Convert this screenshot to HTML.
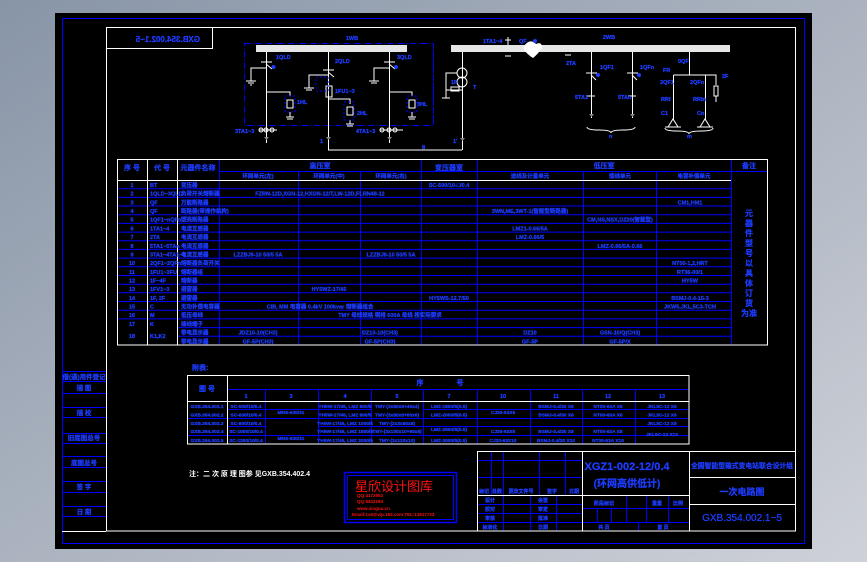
<!DOCTYPE html>
<html><head><meta charset="utf-8"><style>
html,body{margin:0;padding:0;width:867px;height:562px;overflow:hidden}
svg{display:block}
.t{fill:#1d3cff;stroke:#1d3cff;stroke-width:0.25px;font-family:"Liberation Sans","Noto Sans CJK SC",sans-serif;font-weight:bold;font-size:5.5px}
.m{text-anchor:middle}
.w{fill:#fff}
</style></head><body>
<svg width="867" height="562" viewBox="0 0 867 562" xmlns="http://www.w3.org/2000/svg">
<defs><linearGradient id="g" x1="0" y1="0" x2="1" y2="1"><stop offset="0" stop-color="#8895a7"/><stop offset="1" stop-color="#ced1d8"/></linearGradient></defs>
<rect width="867" height="562" fill="url(#g)"/>
<rect x="55" y="13" width="757" height="536" fill="#000"/>
<rect x="62.5" y="18.5" width="742" height="525" fill="none" stroke="#0000ff"/>
<rect x="106.5" y="27.5" width="689" height="503.5" fill="none" stroke="#fff"/>
<rect x="106.5" y="27.5" width="106" height="21" fill="none" stroke="#fff"/>
<text class="t" x="-200" y="42" transform="scale(-1,1)" style="font-size:8px">GXB.354.002.1~5</text>

<g fill="none" stroke="#0000ff" stroke-dasharray="6,2,1,2">
<rect x="244.5" y="43.5" width="189" height="82"/>
</g>
<rect x="256" y="45" width="151" height="7" fill="#e6e6e6"/>
<text class="t m" x="352" y="40">1WB</text>
<g stroke="#fff" fill="none" stroke-width="1">
<path d="M266.5 52V143M328.5 52V150H462M389.5 52V143"/>
<path d="M261 62h11M266 64l6 5M266.5 68H251V81M246 81h10M248 83h6M250 85h2"/>
<path d="M266.5 92H290V96M290 112v5M286 117h8M287 119h6"/>
<rect x="287" y="100" width="6" height="8"/>
<path d="M323 70h11M328 72l6 5M328.5 75H309V88M304 88h10M306 90h6"/>
<rect x="326" y="86" width="6" height="11"/>
<path d="M328.5 99H350V104M350 120v4M346 124h8M347 126h6"/>
<rect x="347" y="107" width="6" height="8"/>
<path d="M384 62h11M389 64l6 5M389.5 68H374V81M369 81h10M371 83h6"/>
<path d="M389.5 92H412V96M412 112v5M408 117h8M409 119h6"/>
<rect x="409" y="100" width="6" height="8"/>
<path d="M259 130h18M385 130h18M380 130h5"/>
<circle cx="261" cy="130" r="2"/><circle cx="266" cy="130" r="2"/><circle cx="272" cy="130" r="2"/>
<circle cx="382" cy="130" r="2"/><circle cx="389" cy="130" r="2"/><circle cx="395" cy="130" r="2"/>
</g>
<g fill="#1d3cff"><circle cx="273.5" cy="67" r="2"/><circle cx="396" cy="67" r="2"/></g>
<g fill="none" stroke="#0000ff" stroke-dasharray="2,2">
<rect x="285" y="96" width="10" height="16"/><rect x="344" y="102" width="10" height="18"/><rect x="407" y="96" width="10" height="16"/><rect x="316" y="77" width="12" height="14"/>
</g>
<g fill="#888"><path d="M264 137h5l-2.5 3zM326 137h5l-2.5 3zM387 137h5l-2.5 3z"/></g>
<g class="t">
<text x="276" y="59">1QLD</text><text x="335" y="63">2QLD</text><text x="397" y="59">3QLD</text>
<text x="297" y="104">1HL</text><text x="357" y="115">2HL</text><text x="417" y="106">3HL</text>
<text x="335" y="93">1FU1~3</text>
<text x="235" y="133">3TA1~3</text><text x="356" y="133">4TA1~3</text>
<text x="320" y="143">1</text><text x="422" y="149">II</text>
</g>

<rect x="451" y="45" width="279" height="7" fill="#e6e6e6"/>
<text class="t m" x="609" y="39">2WB</text>
<g stroke="#fff" fill="none">
<path d="M462.5 52V150M591.5 52V118M632.5 52V118M689.5 52V75H716V85M716 96v6M673.5 75H705.5M673.5 75V120M705.5 75V120"/>
<circle cx="462" cy="73" r="5"/><circle cx="462" cy="82" r="5"/>
<path d="M457 73h-11v17h16M446 90v8M442 98h8M451 87h8v4h-8z"/>
<path d="M586 73h11M591 75l5 5M627 73h11M632 75l5 5"/>
<path d="M587 96h8M628 96h8"/>
<rect x="714" y="86" width="4" height="10"/>
<path d="M668 127l5-8 5 8zM700 127l5-8 5 8zM665 127h16M697 127h16"/>
<path d="M587 127q0 3 12 3t12 3q0-3 12-3t12-3M665 128q0 3 12 3t12 3q0-3 12-3t12-3"/>
<path d="M505 40h6M508 37v8M505 56h6M565 55h6"/>
</g>
<path d="M524 46q6-8 12-2q6-3 6 4q-4 6-9 10q-5-3-9-8z" fill="#fff"/>
<g fill="#1d3cff"><circle cx="535" cy="41" r="2"/><circle cx="598" cy="75" r="2"/><circle cx="639" cy="75" r="2"/></g>
<g fill="#888"><path d="M589 114h5l-2.5 3zM630 114h5l-2.5 3zM460 138h5l-2.5 3z"/></g>
<path d="M433.5 43V125" stroke="#0000ff" stroke-dasharray="6,2"/>
<g class="t">
<text x="483" y="43">1TA1~4</text><text x="519" y="43">QF</text><text x="566" y="65">2TA</text>
<text x="600" y="69">1QF1</text><text x="640" y="69">1QFn</text>
<text x="575" y="99">5TA1</text><text x="618" y="99">5TAn</text>
<text x="678" y="63">0QF</text><text x="722" y="78">2F</text>
<text x="660" y="84">2QF1</text><text x="690" y="84">2QFn</text>
<text x="661" y="101">RRI</text><text x="693" y="101">RRIn</text>
<text x="661" y="115">C1</text><text x="697" y="115">Cn</text>
<text x="663" y="72">FR</text>
<text x="451" y="84">1F</text><text x="473" y="89">T</text><text x="453" y="143">1'</text>
<text x="609" y="138">n</text><text x="687" y="138">m</text>
</g>

<g stroke="#0000ff" fill="none">
<path d="M219 171.5H768"/>
<path d="M117 188.7H731M117 197.4H731M117 206.0H731M117 214.7H731M117 223.4H731M117 232.1H731M117 240.8H731M117 249.4H731M117 258.1H731M117 266.8H731M117 275.5H731M117 284.2H731M117 292.8H731M117 301.5H731M117 310.2H731M117 318.9H731M177 327.6H731M177 336.3H731"/>
<path d="M219.5 159V345M298.5 171V345M360.5 171V345M421.5 159V345M477.5 159V345M583.5 171V345M656.5 171V345M731.5 159V345"/>
</g>
<g stroke="#fff" fill="none">
<rect x="117.5" y="159.5" width="650" height="185.5"/>
<path d="M117 180.5H731M147.5 159V345M177.5 159V345"/>
</g>
<g class="t m" style="font-size:7px">
<text x="132" y="170">序 号</text><text x="162" y="170">代 号</text><text x="198" y="170">元器件名称</text>
<text x="320" y="168">高压室</text><text x="449" y="170">变压器室</text><text x="604" y="168">低压室</text><text x="749" y="168">备注</text>
</g>
<g class="t m">
<text x="258" y="178">环网单元(左)</text><text x="329" y="178">环网单元(中)</text><text x="391" y="178">环网单元(右)</text>
<text x="530" y="178">进线及计量单元</text><text x="620" y="178">馈线单元</text><text x="694" y="178">电容补偿单元</text>
</g>
<g class="t m">
<text x="132" y="187">1</text><text x="132" y="195.7">2</text><text x="132" y="204.4">3</text><text x="132" y="213">4</text><text x="132" y="221.7">5</text><text x="132" y="230.4">6</text><text x="132" y="239.1">7</text><text x="132" y="247.8">8</text><text x="132" y="256.5">9</text><text x="132" y="265.1">10</text><text x="132" y="273.8">11</text><text x="132" y="282.5">12</text><text x="132" y="291.2">13</text><text x="132" y="299.9">14</text><text x="132" y="308.5">15</text><text x="132" y="317.2">16</text><text x="132" y="325.9">17</text><text x="132" y="338">18</text>
</g>
<g class="t">
<text x="150" y="187">BT</text><text x="150" y="195.7">1QLD~3QLD</text><text x="150" y="204.4">QF</text><text x="150" y="213">QF</text><text x="150" y="221.7">1QF1~nQFn</text><text x="150" y="230.4">1TA1~4</text><text x="150" y="239.1">2TA</text><text x="150" y="247.8">5TA1~5TAn</text><text x="150" y="256.5">3TA1~4TA1~3</text><text x="150" y="265.1">2QF1~2QFn</text><text x="150" y="273.8">1FU1~3FU</text><text x="150" y="282.5">1F~4F</text><text x="150" y="291.2">1FV1~3</text><text x="150" y="299.9">1F, 2F</text><text x="150" y="308.5">C</text><text x="150" y="317.2">M</text><text x="150" y="325.9">K</text><text x="150" y="338">K1,K2</text>
<text x="181" y="187">变压器</text><text x="181" y="195.7">负荷开关熔断器</text><text x="181" y="204.4">万能断路器</text><text x="181" y="213">断路器(带操作机构)</text><text x="181" y="221.7">塑壳断路器</text><text x="181" y="230.4">电流互感器</text><text x="181" y="239.1">电流互感器</text><text x="181" y="247.8">电流互感器</text><text x="181" y="256.5">电流互感器</text><text x="181" y="265.1">熔断器负荷开关</text><text x="181" y="273.8">熔断器组</text><text x="181" y="282.5">熔断器</text><text x="181" y="291.2">避雷器</text><text x="181" y="299.9">避雷器</text><text x="181" y="308.5">无功补偿电容器</text><text x="181" y="317.2">低压母线</text><text x="181" y="325.9">接线端子</text><text x="181" y="334.6">带电显示器</text><text x="181" y="343.3">带电显示器</text>
</g>
<g class="t m">
<text x="449" y="187">SC-500/10-□/0.4</text>
<text x="320" y="195.7">FZRN-12D,XGN-12,HXGN-12/T,LW-12D,FLRN48-12</text>
<text x="690" y="204.4">CM1,HM1</text>
<text x="530" y="213">3WN,ME,3WT-1(智能型断路器)</text>
<text x="620" y="221.7">CM,NS,NSX,DZ20(智能型)</text>
<text x="530" y="230.4">LMZ1-0.66/5A</text>
<text x="530" y="239.1">LMZ-0.66/5</text>
<text x="620" y="247.8">LMZ-0.66/5A-0.66</text>
<text x="258" y="256.5">LZZBJ9-10 50/5 5A</text><text x="391" y="256.5">LZZBJ9-10 50/5 5A</text>
<text x="690" y="265.1">NT00-1,2,HRT</text>
<text x="690" y="273.8">RT36-00/1</text>
<text x="690" y="282.5">HY5W</text>
<text x="329" y="291.2">HY5WZ-17/45</text>
<text x="449" y="299.9">HY5WS-12.7/50</text><text x="690" y="299.9">BSMJ-0.4-15-3</text>
<text x="320" y="308.5">CIB, MM 电容器 0.4kV 100kvar 熔断器组合</text><text x="690" y="308.5">JKW5,JKL,5C3-TCH</text>
<text x="390" y="317.2">TMY 母线规格 铜排 600A 母线 按实际要求</text>
<text x="258" y="334.6">JDZ10-10(CH3)</text><text x="380" y="334.6">DZ10-10(CH3)</text><text x="530" y="334.6">DZ10</text><text x="620" y="334.6">GSN-10/Q(CH3)</text>
<text x="258" y="343.3">GF-5P(CH3)</text><text x="380" y="343.3">GF-5P(CH3)</text><text x="530" y="343.3">GF-5P</text><text x="620" y="343.3">GF-5P/X</text>
</g>
<g class="t m" style="font-size:8px">
<text x="749" y="216">元</text><text x="749" y="226">器</text><text x="749" y="236">件</text><text x="749" y="246">型</text><text x="749" y="256">号</text><text x="749" y="266">以</text><text x="749" y="276">具</text><text x="749" y="286">体</text><text x="749" y="296">订</text><text x="749" y="306">货</text><text x="749" y="316">为准</text>
</g>

<g stroke="#0000ff">
<path d="M62 371.5H106M62 381.5H106M62 393.5H106M62 407.5H106M62 417.5H106M62 433.5H106M62 443.5H106M62 456.5H106M62 467.5H106M62 481.5H106M62 492.5H106M62 506.5H106M62 516.5H106"/>
</g>
<path d="M62 531.5H106" stroke="#fff"/>
<g class="t m" style="font-size:6.5px">
<text x="84" y="379">借(通)用件登记</text><text x="84" y="390">描 图</text><text x="84" y="415">描 校</text><text x="84" y="440">旧底图总号</text><text x="84" y="465">底图总号</text><text x="84" y="489">签 字</text><text x="84" y="514">日 期</text>
</g>

<text class="t" x="192" y="370" style="font-size:7px">附表:</text>
<g stroke="#0000ff" fill="none">
<path d="M227 389.5H689M227 409.5H371M423 409.5H689M187 418.5H689M227 426.5H265M318 426.5H689M187 435.5H689"/>
<path d="M265.5 389V444M318.5 389V444M371.5 389V444M423.5 389V444M477.5 389V444M530.5 389V444M582.5 389V444M635.5 389V444"/>
</g>
<g stroke="#fff" fill="none"><rect x="187.5" y="375.5" width="501.5" height="68.5"/><path d="M187 401.5H689M227.5 375V444"/></g>
<g class="t m" style="font-size:7px"><text x="207" y="391">图 号</text><text x="420" y="385">序</text><text x="460" y="385">号</text></g>
<g class="t m"><text x="246" y="398">1</text><text x="291" y="398">3</text><text x="345" y="398">4</text><text x="397" y="398">5</text><text x="449" y="398">7</text><text x="503" y="398">10</text><text x="556" y="398">11</text><text x="608" y="398">12</text><text x="662" y="398">13</text></g>
<g class="t m" style="font-size:4.8px">
<text x="207" y="408">GXB.354.002.1</text><text x="207" y="416.5">GXB.354.002.2</text><text x="207" y="425">GXB.354.002.3</text><text x="207" y="433">GXB.354.002.4</text><text x="207" y="442">GXB.354.002.5</text>
<text x="246" y="408">SC-500/10/0.4</text><text x="246" y="416.5">SC-630/10/0.4</text><text x="246" y="425">SC-800/10/0.4</text><text x="246" y="433">SC-1000/10/0.4</text><text x="246" y="442">SC-1250/10/0.4</text>
<text x="291" y="414">MNS-600/31</text><text x="291" y="440">MNS-630/31</text>
<text x="345" y="408">YH5W-17/45, LMZ 600/5</text><text x="345" y="416.5">YH5W-17/45, LMZ 800/5</text><text x="345" y="425">YH5W-17/45, LMZ 1000/5</text><text x="345" y="433">YH5W-17/45, LMZ 1500/5</text><text x="345" y="442">YH5W-17/45, LMZ 2000/5</text>
<text x="397" y="408">TMY-(3x60x6+40x4)</text><text x="397" y="416.5">TMY-(3x80x8+60x6)</text><text x="397" y="425">TMY-(2x3x80x8)</text><text x="397" y="433">TMY-(3x100x10+80x8)</text><text x="397" y="442">TMY-(3x120x10)</text>
<text x="449" y="408">LMZ-1500/5(0.5)</text><text x="449" y="416.5">LMZ-2000/5(0.5)</text><text x="449" y="431">LMZ-2500/5(0.5)</text><text x="449" y="442">LMZ-3000/5(0.5)</text>
<text x="503" y="414">CJ20-63X6</text><text x="503" y="433">CJ20-63X8</text><text x="503" y="442">CJ20-63X10</text>
<text x="556" y="408">BSMJ-0.4/30 X6</text><text x="556" y="416.5">BSMJ-0.4/30 X6</text><text x="556" y="433">BSMJ-0.4/30 X8</text><text x="556" y="442">BSMJ-0.4/30 X10</text>
<text x="608" y="408">NT00-63A X6</text><text x="608" y="416.5">NT00-63A X6</text><text x="608" y="433">NT00-63A X8</text><text x="608" y="442">NT00-63A X10</text>
<text x="662" y="408">JKL5C-12 X6</text><text x="662" y="416.5">JKL5C-12 X6</text><text x="662" y="425">JKL5C-12 X8</text><text x="662" y="436">JKL5C-12 X10</text>
</g>

<text class="w" x="189" y="476" style="font-family:'Liberation Sans','Noto Sans CJK SC',sans-serif;font-size:7px;font-weight:bold">注：二 次 原 理 图参 见GXB.354.402.4</text>

<rect x="344.5" y="472.5" width="112" height="50" fill="none" stroke="#0000ff" stroke-width="1.5"/>
<rect x="347.5" y="475.5" width="106" height="44" fill="none" stroke="#0000ff"/>
<text x="355" y="491" fill="#ff1010" style="font-family:'Noto Sans CJK SC',sans-serif;font-size:13px">星欣设计图库</text>
<g fill="#ff1010" style="font-family:'Liberation Sans','Noto Sans CJK SC',sans-serif;font-size:4.5px;font-weight:bold">
<text x="357" y="497">QQ:4172553</text><text x="357" y="503">QQ:5432194</text><text x="357" y="510">www.xinguu.cn</text><text x="352" y="516">Email:1x6@vip.163.com TEL:13617723</text>
</g>

<g stroke="#0000ff" fill="none">
<path d="M477 460.5H582M477 477.5H582M582 508.5H689M477 504.5H582M477 513.5H582M477 522.5H582M582 522.5H689"/>
<path d="M491.5 451V495M503.5 451V531M539.5 451V495M565.5 451V495M530.5 495V531M556.5 495V531M626.5 495V522M646.5 495V522M668.5 495V522M597.5 508V522M611.5 508V522M638.5 522V531"/>
</g>
<g stroke="#fff" fill="none">
<rect x="477.5" y="451.5" width="318" height="79.5"/>
<path d="M477 495.5H689M582.5 451V531M689.5 451V531M689 477.5H796M689 504.5H796"/>
</g>
<g class="t m" style="font-size:5px">
<text x="484" y="493">标记</text><text x="497" y="493">处数</text><text x="521" y="493">更改文件号</text><text x="552" y="493">签字</text><text x="574" y="493">日期</text>
<text x="490" y="502">设计</text><text x="490" y="511">校对</text><text x="490" y="520">审核</text><text x="490" y="529">标准化</text>
<text x="543" y="502">会签</text><text x="543" y="511">审定</text><text x="543" y="520">批准</text><text x="543" y="529">日期</text>
<text x="604" y="505">阶段标记</text><text x="657" y="505">重量</text><text x="678" y="505">比例</text>
<text x="604" y="529">共 页</text><text x="663" y="529">第 页</text>
</g>
<text class="t m" x="627" y="470" style="font-size:11px">XGZ1-002-12/0.4</text>
<text class="t m" x="627" y="487" style="font-size:10px;fill:#1d3cff">(环网高供低计)</text>
<text class="t m" x="742" y="468" style="font-size:6.8px">全国智能型箱式变电站联合设计组</text>
<text class="t m" x="742" y="495" style="font-size:9px">一次电路图</text>
<text class="t m" x="742" y="521" style="font-size:10px;font-weight:normal">GXB.354.002.1~5</text>
</svg>
</body></html>
